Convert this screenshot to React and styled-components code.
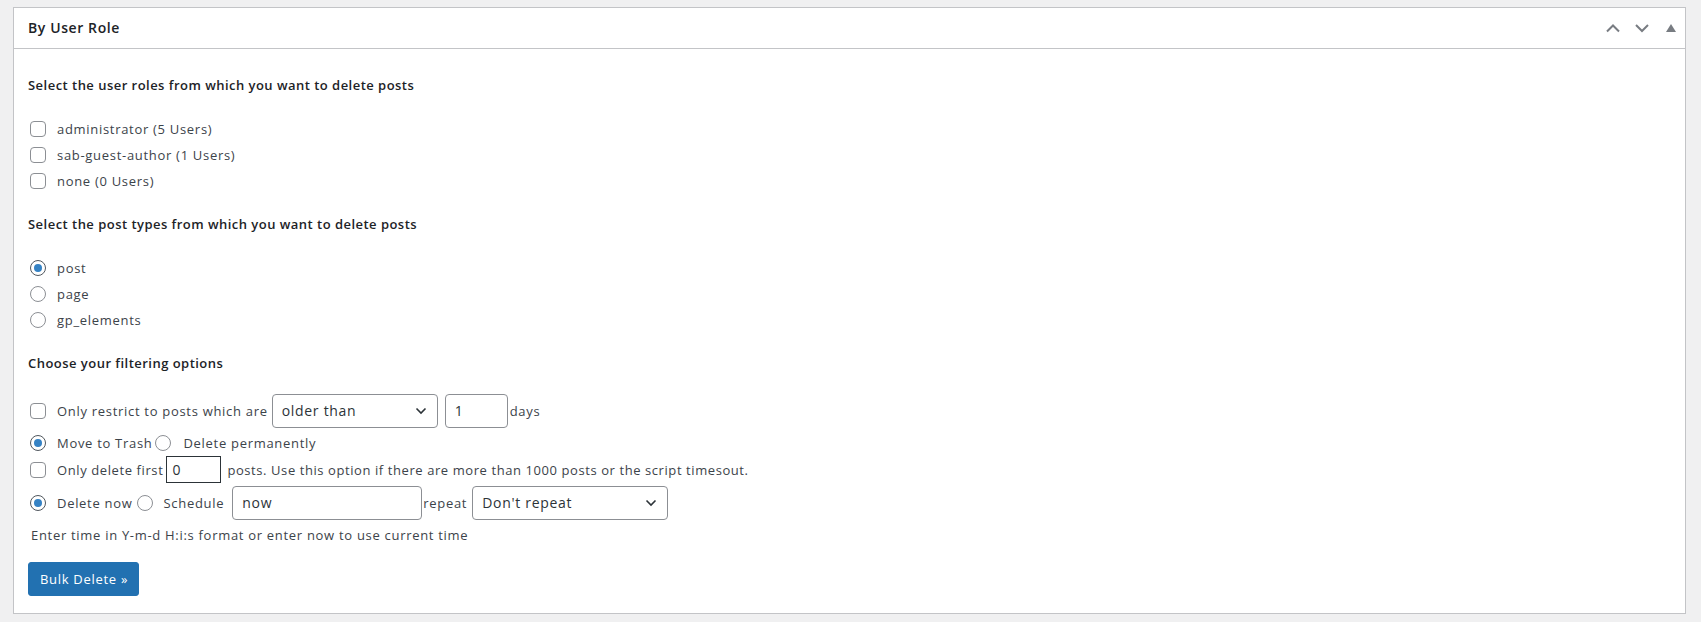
import React from 'react'
import styled, { createGlobalStyle } from 'styled-components'

const GlobalStyle = createGlobalStyle`
  html, body {
    margin: 0;
    background: #f0f0f1;
  }
  body {
    font-family: 'Open Sans', 'Liberation Sans', sans-serif;
    font-size: 13px;
    line-height: 20px;
    letter-spacing: 0.7px;
    color: #3c434a;
  }
`

const Page = styled.div`
  padding: 7px 15px 9px 13px;
`

const Postbox = styled.div`
  background: #fff;
  border: 1px solid #c3c4c7;
`

const Header = styled.div`
  display: flex;
  align-items: center;
  justify-content: space-between;
  height: 40px;
  padding-left: 14px;
  border-bottom: 1px solid #c3c4c7;
`

const Title = styled.h2`
  margin: 0;
  font-size: 14px;
  font-weight: 600;
  letter-spacing: 0.6px;
  color: #1d2327;
`

const Handles = styled.div`
  display: flex;
  align-items: center;
`

const HandleButton = styled.span`
  display: flex;
  align-items: center;
  justify-content: center;
  width: 29px;
  height: 36px;
  color: #787c82;
`

const Inside = styled.div`
  padding: 0 14px 17px;
`

const SectionTitle = styled.h4`
  margin: ${p => p.$top || 20}px 0 21px;
  font-size: 13px;
  font-weight: 600;
  letter-spacing: 0.47px;
  color: #1d2327;
`

const OptionList = styled.div`
  display: flex;
  flex-direction: column;
`

const OptionRow = styled.label`
  display: flex;
  align-items: center;
  height: 26px;
  padding-left: 2px;
`

const FilterRow = styled.div`
  display: flex;
  align-items: center;
  padding-left: 2px;
  min-height: ${p => p.$h || 26}px;
  margin-top: ${p => p.$mt || 0}px;
`

const Check = styled.span`
  flex: none;
  box-sizing: border-box;
  width: 16px;
  height: 16px;
  border: 1px solid #8c8f94;
  border-radius: 4px;
  background: #fff;
  margin-right: 11px;
`

const Radio = styled.span`
  flex: none;
  box-sizing: border-box;
  width: 16px;
  height: 16px;
  border: 1px solid ${p => (p.$on ? '#50575e' : '#8c8f94')};
  border-radius: 50%;
  background: #fff;
  display: flex;
  align-items: center;
  justify-content: center;
  margin-left: ${p => p.$ml || 0}px;
  margin-right: ${p => p.$mr || 11}px;
  &::after {
    content: '';
    display: ${p => (p.$on ? 'block' : 'none')};
    width: 8px;
    height: 8px;
    border-radius: 50%;
    background: #3582c4;
  }
`

const Text = styled.span`
  white-space: nowrap;
  margin-right: ${p => p.$mr || 0}px;
  letter-spacing: ${p => p.$ls || 'inherit'};
`

const SelectBox = styled.span`
  box-sizing: border-box;
  display: flex;
  align-items: center;
  justify-content: space-between;
  width: ${p => p.$w}px;
  height: 34px;
  padding: 0 10px 0 9px;
  border: 1px solid #8c8f94;
  border-radius: 4px;
  font-size: 14px;
  color: #2c3338;
  margin-right: ${p => p.$mr || 0}px;
`

const TextInput = styled.span`
  box-sizing: border-box;
  display: flex;
  align-items: center;
  width: ${p => p.$w}px;
  height: ${p => p.$h || 34}px;
  padding: 0 ${p => (p.$square ? 5 : 9)}px;
  border: 1px solid ${p => (p.$square ? '#2c3338' : '#8c8f94')};
  border-radius: ${p => (p.$square ? 0 : 4)}px;
  font-size: 14px;
  color: #2c3338;
  margin-right: ${p => p.$mr || 0}px;
`

const Help = styled.p`
  margin: 5px 0 0 3px;
  color: #3c434a;
`

const Button = styled.button`
  margin-top: 17px;
  height: 34px;
  padding: 0 10px 0 11px;
  background: #2271b1;
  border: 1px solid #2271b1;
  border-radius: 3px;
  color: #fff;
  font-family: inherit;
  font-size: 13px;
  letter-spacing: 0.7px;
`

const Chevron = ({ up }) => (
  <svg width="16" height="16" viewBox="0 0 16 16" fill="none" stroke="currentColor" strokeWidth="2">
    <path d={up ? 'M2 11.5 L8 5.5 L14 11.5' : 'M2 5 L8 11 L14 5'} />
  </svg>
)

const Triangle = () => (
  <svg width="10" height="8" viewBox="0 0 10 8" fill="currentColor">
    <path d="M5 0 L10 8 L0 8 Z" />
  </svg>
)

const SelectArrow = () => (
  <svg width="12" height="8" viewBox="0 0 12 8" fill="none" stroke="#2c3338" strokeWidth="1.6">
    <path d="M1.5 1.5 L6 6 L10.5 1.5" />
  </svg>
)

const roles = ['administrator (5 Users)', 'sab-guest-author (1 Users)', 'none (0 Users)']
const postTypes = [
  { name: 'post', on: true },
  { name: 'page' },
  { name: 'gp_elements' },
]

export default function App() {
  return (
    <Page>
      <GlobalStyle />
      <Postbox>
        <Header>
          <Title>By User Role</Title>
          <Handles>
            <HandleButton><Chevron up /></HandleButton>
            <HandleButton><Chevron /></HandleButton>
            <HandleButton><Triangle /></HandleButton>
          </Handles>
        </Header>
        <Inside>
          <SectionTitle $top={26}>Select the user roles from which you want to delete posts</SectionTitle>
          <OptionList>
            {roles.map(r => (
              <OptionRow key={r}>
                <Check />
                <Text>{r}</Text>
              </OptionRow>
            ))}
          </OptionList>

          <SectionTitle>Select the post types from which you want to delete posts</SectionTitle>
          <OptionList>
            {postTypes.map(t => (
              <OptionRow key={t.name}>
                <Radio $on={t.on} />
                <Text>{t.name}</Text>
              </OptionRow>
            ))}
          </OptionList>

          <SectionTitle>Choose your filtering options</SectionTitle>

          <FilterRow $h={34} $mt={3}>
            <Check />
            <Text $mr={4}>Only restrict to posts which are</Text>
            <SelectBox $w={166} $mr={7}>
              <span>older than</span>
              <SelectArrow />
            </SelectBox>
            <TextInput $w={63} $mr={2}>1</TextInput>
            <Text>days</Text>
          </FilterRow>

          <FilterRow $mt={2}>
            <Radio $on />
            <Text>Move to Trash</Text>
            <Radio $ml={3} $mr={12} />
            <Text>Delete permanently</Text>
          </FilterRow>

          <FilterRow>
            <Check />
            <Text $mr={3} $ls="0.6px">Only delete first</Text>
            <TextInput $w={55} $h={27} $square $mr={6}>0</TextInput>
            <Text $ls="0.58px">posts. Use this option if there are more than 1000 posts or the script timesout.</Text>
          </FilterRow>

          <FilterRow $h={34} $mt={3}>
            <Radio $on />
            <Text>Delete now</Text>
            <Radio $ml={4} $mr={11} />
            <Text $mr={8}>Schedule</Text>
            <TextInput $w={190} $mr={1}>now</TextInput>
            <Text $mr={5}>repeat</Text>
            <SelectBox $w={196}>
              <span>Don't repeat</span>
              <SelectArrow />
            </SelectBox>
          </FilterRow>

          <Help>Enter time in Y-m-d H:i:s format or enter now to use current time</Help>

          <Button>Bulk Delete &raquo;</Button>
        </Inside>
      </Postbox>
    </Page>
  )
}
